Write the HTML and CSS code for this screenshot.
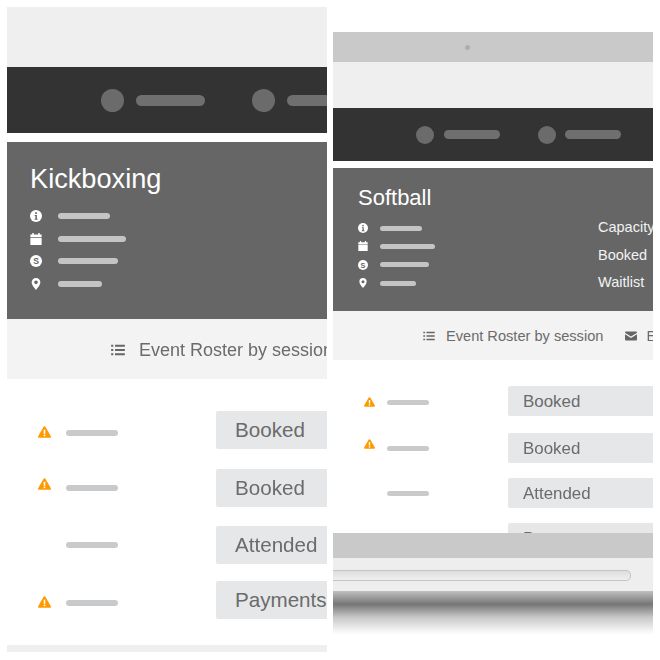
FILE: index.html
```html
<!DOCTYPE html>
<html lang="en">
<head>
  <meta charset="UTF-8" />
  <title>Event screens</title>
  <link rel="stylesheet" href="styles.css">
</head>
<body>
  <svg class="icon-defs" aria-hidden="true">
    <symbol id="i-info" viewBox="0 0 16 16">
      <circle cx="8" cy="8" r="8" fill="#fff"/>
      <rect x="6.9" y="3" width="2.3" height="2.3" fill="#666"/>
      <path d="M6.2 6.6h3v5h1v1.4H6.2v-1.4h1v-3.6h-1z" fill="#666"/>
    </symbol>
    <symbol id="i-cal" viewBox="0 0 16 16">
      <path d="M3 0h2v2h6V0h2v2h2.5v3.4H.5V2H3zM.5 6.4h15V16H.5z" fill="#fff"/>
    </symbol>
    <symbol id="i-dollar" viewBox="0 0 16 16">
      <circle cx="8" cy="8" r="8" fill="#fff"/>
      <text x="8" y="12.2" text-anchor="middle" class="icon-letter">S</text>
    </symbol>
    <symbol id="i-pin" viewBox="0 0 16 16">
      <path fill-rule="evenodd" d="M8 0a5.8 5.8 0 0 1 5.8 5.8C13.800 9.500 9.800 13.500 8 16 6.200 13.500 2.200 9.500 2.200 5.800A5.800 5.800 0 0 1 8 0zm0 3.400a2.400 2.400 0 1 0 0 4.800 2.400 2.400 0 0 0 0-4.800z" fill="#fff"/>
    </symbol>
    <symbol id="i-list" viewBox="0 0 16 14">
      <path d="M0 1h2.500v2.200H0zM4.500 1H16v2.200H4.500zM0 5.900h2.500v2.200H0zM4.500 5.900H16v2.200H4.500zM0 10.800h2.500V13H0zM4.500 10.800H16V13H4.500z" fill="#666"/>
    </symbol>
    <symbol id="i-mail" viewBox="0 0 16 12">
      <path d="M1.200 0h13.600c.7 0 1.200.5 1.200 1.200v.6L8 6.800 0 1.800v-.6C0 .5.500 0 1.200 0zM0 3.600l8 5 8-5v7.200c0 .7-.5 1.200-1.200 1.200H1.200C.5 12 0 11.500 0 10.800z" fill="#666"/>
    </symbol>
    <symbol id="i-warn" viewBox="0 0 16 14">
      <path d="M8 0c.6 0 1 .3 1.300.8l6.500 11.300c.5.900-.1 1.900-1.100 1.900H1.300C.3 14-.3 13 .2 12.100L6.700.8C7 .3 7.400 0 8 0z" fill="#f90"/>
      <rect x="7" y="4.200" width="2" height="5" fill="#fff"/>
      <rect x="7" y="10.200" width="2" height="2" fill="#fff"/>
    </symbol>
  </svg>

  <section class="window window-lg">
    <div class="top-band"></div>
    <nav class="nav">
      <div class="nav-item"><span class="dot"></span><span class="nav-bar"></span></div>
      <div class="nav-item"><span class="dot"></span><span class="nav-bar"></span></div>
    </nav>
    <header class="hero">
      <div class="hero-main">
        <h1>Kickboxing</h1>
        <ul class="meta">
          <li><svg class="meta-icon"><use href="#i-info"/></svg><span class="meta-bar w1"></span></li>
          <li><svg class="meta-icon"><use href="#i-cal"/></svg><span class="meta-bar w2"></span></li>
          <li><svg class="meta-icon"><use href="#i-dollar"/></svg><span class="meta-bar w3"></span></li>
          <li><svg class="meta-icon"><use href="#i-pin"/></svg><span class="meta-bar w4"></span></li>
        </ul>
      </div>
    </header>
    <div class="tabs">
      <svg class="tab-icon"><use href="#i-list"/></svg>
      <span class="tab-label">Event Roster by session</span>
    </div>
    <div class="roster">
      <div class="row row-1">
        <div class="who"><svg class="warn"><use href="#i-warn"/></svg><span class="who-bar"></span></div>
        <div class="pill">Booked</div>
      </div>
      <div class="row row-2">
        <div class="who"><svg class="warn"><use href="#i-warn"/></svg><span class="who-bar"></span></div>
        <div class="pill">Booked</div>
      </div>
      <div class="row row-3">
        <div class="who"><span class="warn"></span><span class="who-bar"></span></div>
        <div class="pill">Attended</div>
      </div>
      <div class="row row-4">
        <div class="who"><svg class="warn"><use href="#i-warn"/></svg><span class="who-bar"></span></div>
        <div class="pill">Payments</div>
      </div>
    </div>
    <div class="foot-band"></div>
  </section>

  <section class="window window-sm">
    <div class="camera-bar"><span class="camera"></span></div>
    <div class="top-band"></div>
    <nav class="nav">
      <div class="nav-item"><span class="dot"></span><span class="nav-bar"></span></div>
      <div class="nav-item"><span class="dot"></span><span class="nav-bar"></span></div>
    </nav>
    <header class="hero">
      <div class="hero-main">
        <h1>Softball</h1>
        <ul class="meta">
          <li><svg class="meta-icon"><use href="#i-info"/></svg><span class="meta-bar w1"></span></li>
          <li><svg class="meta-icon"><use href="#i-cal"/></svg><span class="meta-bar w2"></span></li>
          <li><svg class="meta-icon"><use href="#i-dollar"/></svg><span class="meta-bar w3"></span></li>
          <li><svg class="meta-icon"><use href="#i-pin"/></svg><span class="meta-bar w4"></span></li>
        </ul>
      </div>
      <ul class="stats">
        <li>Capacity</li>
        <li>Booked</li>
        <li>Waitlist</li>
      </ul>
    </header>
    <div class="tabs">
      <svg class="tab-icon"><use href="#i-list"/></svg>
      <span class="tab-label">Event Roster by session</span>
      <svg class="tab-icon tab-mail"><use href="#i-mail"/></svg>
      <span class="tab-label">Email</span>
    </div>
    <div class="roster">
      <div class="row row-1">
        <div class="who"><svg class="warn"><use href="#i-warn"/></svg><span class="who-bar"></span></div>
        <div class="pill">Booked</div>
      </div>
      <div class="row row-2">
        <div class="who"><svg class="warn"><use href="#i-warn"/></svg><span class="who-bar"></span></div>
        <div class="pill">Booked</div>
      </div>
      <div class="row row-3">
        <div class="who"><span class="warn"></span><span class="who-bar"></span></div>
        <div class="pill">Attended</div>
      </div>
      <div class="row row-4">
        <div class="who"><span class="warn"></span></div>
        <div class="pill">Payments</div>
      </div>
    </div>
    <div class="browser-bar">
      <div class="browser-title"></div>
      <div class="browser-url"><span class="url-field"></span></div>
      <div class="browser-shadow"></div>
    </div>
  </section>
</body>
</html>
```

FILE: styles.css
```css
body {
  margin: 0;
  padding: 7px 0 0 7px;
  height: 660px;
  box-sizing: border-box;
  overflow: hidden;
  background: #fff;
  font-family: 'Liberation Sans', Arial, sans-serif;
  display: flex;
  align-items: flex-start;
  gap: 6px;
}

ul {
  margin: 0;
  padding: 0;
  list-style: none;
}

.icon-defs {
  display: none;
}

.icon-letter {
  font-family: 'Liberation Sans', Arial, sans-serif;
  font-size: 11.5px;
  font-weight: bold;
  fill: #666;
}

.window {
  position: relative;
  flex: none;
  width: 320px;
  overflow: hidden;
  filter: blur(0.45px);
}

.window-lg {
  height: 645px;
}

.window-sm {
  height: 603px;
  margin-top: 25px;
}

.top-band {
  background: #efefef;
}

.nav {
  display: flex;
  align-items: center;
  background: #333;
}

.nav-item {
  display: flex;
  flex: none;
  align-items: center;
}

.dot {
  border-radius: 50%;
  background: #6b6b6b;
}

.nav-bar {
  background: #6f6f6f;
}

.hero {
  display: flex;
  background: #666;
  color: #fff;
}

.hero-main {
  flex: none;
}

h1 {
  margin: 0;
  font-weight: normal;
}

.meta li {
  display: flex;
  align-items: center;
}

.meta-bar {
  background: #c4c4c4;
}

.tabs {
  display: flex;
  align-items: center;
  background: #f3f3f3;
  color: #6b6b6b;
  white-space: nowrap;
}

.tab-icon {
  flex: none;
}

.row {
  display: flex;
  align-items: center;
}

.who {
  display: flex;
  flex: none;
  align-items: center;
}

.warn {
  flex: none;
}

.who-bar {
  background: #c9cacc;
}

.pill {
  flex: none;
  box-sizing: border-box;
  width: 240px;
  border-radius: 2px;
  background: #e6e7e9;
  color: #6b6b6b;
}

/* big window on the left */
.window-lg .top-band { height: 60px; }
.window-lg .nav { height: 66px; margin-bottom: 9px; padding-left: 94px; gap: 47px; }
.window-lg .nav-item { gap: 12px; }
.window-lg .dot { width: 23px; height: 23px; }
.window-lg .nav-bar { width: 69px; height: 11px; border-radius: 6px; }
.window-lg .hero { height: 177px; padding: 20px 23px 0; box-sizing: border-box; }
.window-lg h1 { font-size: 27.2px; line-height: 34px; }
.window-lg .meta { margin-top: 9px; }
.window-lg .meta li { height: 22.6px; gap: 16px; }
.window-lg .meta-icon { width: 12px; height: 12px; }
.window-lg .meta-bar { height: 6px; border-radius: 3px; }
.window-lg .w1 { width: 52px; }
.window-lg .w2 { width: 68px; }
.window-lg .w3 { width: 60px; }
.window-lg .w4 { width: 44px; }
.window-lg .tabs { height: 60px; padding: 2px 0 0 104px; box-sizing: border-box; gap: 14px; font-size: 18px; }
.window-lg .tab-icon { width: 14px; height: 12px; }
.window-lg .roster { height: 266px; padding: 32px 0 0 31px; box-sizing: border-box; }
.window-lg .row { height: 38px; gap: 98px; }
.window-lg .row-2 { margin-top: 20px; }
.window-lg .row-3 { margin-top: 19px; }
.window-lg .row-4 { margin-top: 17px; }
.window-lg .who { gap: 15px; width: 80px; }
.window-lg .warn { width: 13px; height: 12px; }
.window-lg .who-bar { width: 52px; height: 6px; border-radius: 3px; }
.window-lg .row-1 .who, .window-lg .row-4 .who { margin-top: 3px; }
.window-lg .row-1 .who-bar, .window-lg .row-4 .who-bar { margin-top: 2px; }
.window-lg .row-2 .warn { margin-bottom: 8px; }
.window-lg .pill { height: 38px; padding-left: 19px; font-size: 20.6px; line-height: 38px; }
.foot-band { height: 7px; background: #efefef; }

/* smaller window on the right */
.camera-bar {
  display: flex;
  align-items: center;
  height: 30px;
  padding-left: 132px;
  background: #c9c9c9;
}
.camera { width: 5px; height: 5px; border-radius: 50%; background: #aeaeae; }
.window-sm .top-band { height: 46px; }
.window-sm .nav { height: 53px; margin-bottom: 7px; padding-left: 83px; gap: 38px; }
.window-sm .nav-item { gap: 9.5px; }
.window-sm .dot { width: 18px; height: 18px; }
.window-sm .nav-bar { width: 56px; height: 9px; border-radius: 5px; }
.window-sm .hero { height: 143px; padding: 16px 0 0 25px; box-sizing: border-box; }
.window-sm .hero-main { width: 240px; }
.window-sm h1 { font-size: 22px; line-height: 28px; }
.window-sm .meta { margin-top: 7px; }
.window-sm .meta li { height: 18.3px; gap: 12px; }
.window-sm .meta-icon { width: 10px; height: 10px; }
.window-sm .meta-bar { height: 5px; border-radius: 3px; }
.window-sm .w1 { width: 42px; }
.window-sm .w2 { width: 55px; }
.window-sm .w3 { width: 49px; }
.window-sm .w4 { width: 36px; }
.stats { padding-top: 30px; font-size: 14.5px; line-height: 27.5px; white-space: nowrap; color: #f2f2f2; }
.window-sm .tabs { height: 49px; padding-left: 90px; font-size: 14.6px; }
.window-sm .tab-icon { width: 12px; height: 10px; margin-right: 11px; }
.window-sm .tab-mail { margin: 0 9px 0 22px; }
.window-sm .roster { padding: 26px 0 0 31px; }
.window-sm .row { height: 30px; gap: 79px; }
.window-sm .row-2 { margin-top: 17px; }
.window-sm .row-3 { margin-top: 15px; }
.window-sm .row-4 { margin-top: 15px; }
.window-sm .who { gap: 12px; width: 65px; }
.window-sm .warn { width: 11px; height: 10px; }
.window-sm .who-bar { width: 42px; height: 5px; border-radius: 3px; }
.window-sm .row-1 .who { margin-top: 2px; }
.window-sm .row-1 .who-bar { margin-top: 1px; }
.window-sm .row-2 .warn { margin-bottom: 8px; }
.window-sm .pill { height: 30px; padding-left: 15px; font-size: 16.9px; line-height: 31px; }

/* browser chrome lying over the bottom of the small window */
.browser-bar {
  position: absolute;
  left: 0;
  right: 0;
  bottom: 0;
}
.browser-title { height: 25px; background: #c9c9c9; }
.browser-url { height: 33px; padding-top: 12px; box-sizing: border-box; background: #eee; }
.url-field {
  display: block;
  width: 298px;
  height: 11px;
  box-sizing: border-box;
  border: 1px solid #c4c4c4;
  border-left: 0;
  border-radius: 0 5px 5px 0;
  background: linear-gradient(#dedede, #efefef);
}
.browser-shadow {
  height: 44px;
  background: linear-gradient(#c0c0c0, #767676 30%, #c8c8c8 60%, #f4f4f4 90%, #fff);
}
```
